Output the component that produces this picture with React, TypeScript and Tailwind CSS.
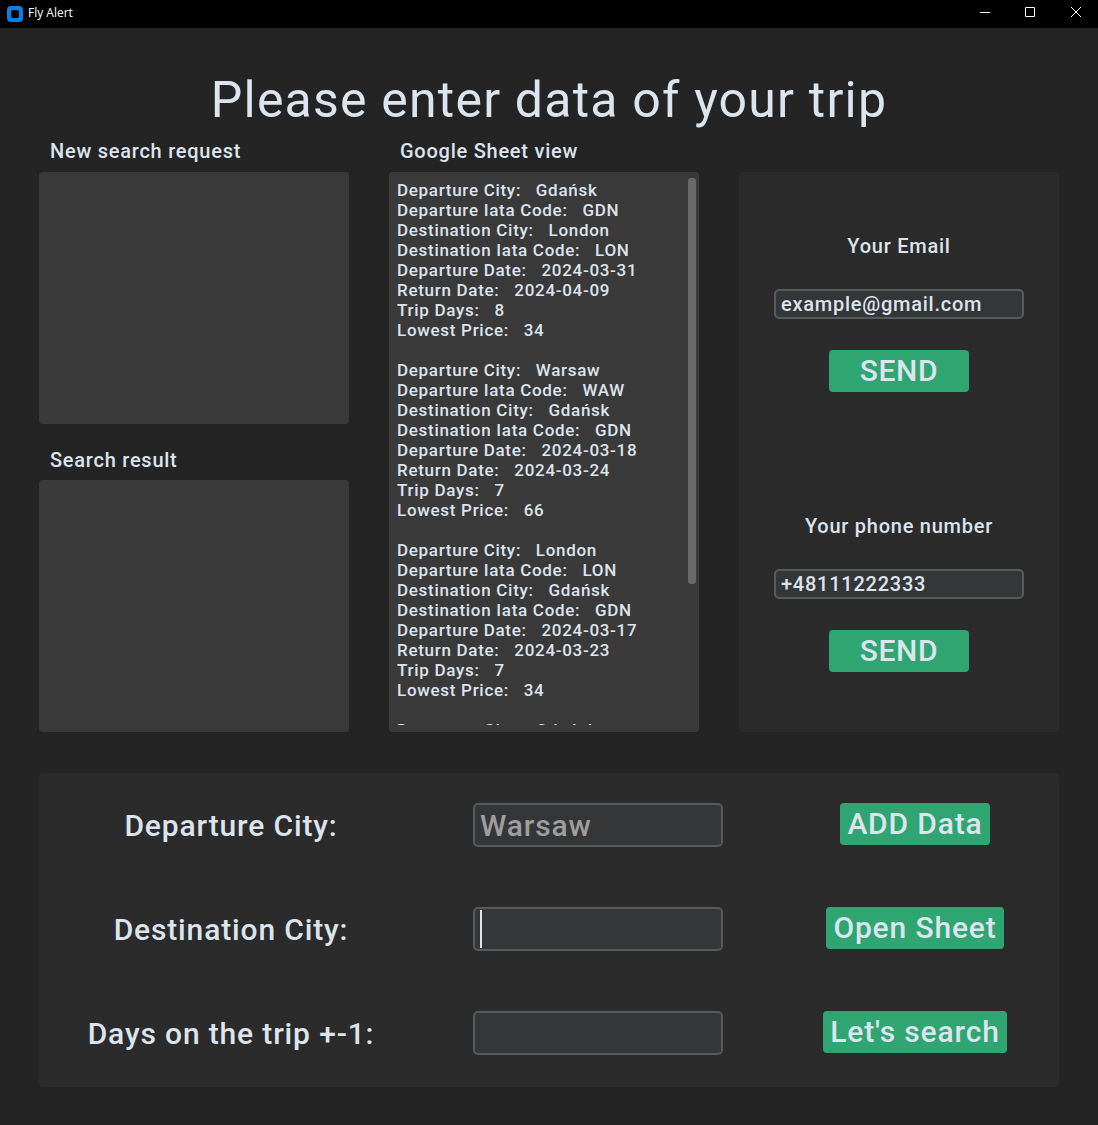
import React from "react";

const trips = [
  ["Gdańsk", "GDN", "London", "LON", "2024-03-31", "2024-04-09", "8", "34"],
  ["Warsaw", "WAW", "Gdańsk", "GDN", "2024-03-18", "2024-03-24", "7", "66"],
  ["London", "LON", "Gdańsk", "GDN", "2024-03-17", "2024-03-23", "7", "34"],
  ["Gdańsk", "GDN", "London", "LON", "2024-03-31", "2024-04-09", "8", "34"],
];
const labels = ["Departure City", "Departure Iata Code", "Destination City", "Destination Iata Code", "Departure Date", "Return Date", "Trip Days", "Lowest Price"];

function Contact({ label, value }: { label: string; value: string }) {
  return (
    <div className="flex h-[280px] flex-col items-center">
      <div className="mt-[60px] h-[28px] text-[20px] leading-[28px] tracking-[0.75px]">{label}</div>
      <div className="mt-[29px] flex h-[30px] w-[250px] items-center rounded-[5px] border-2 border-[#565b5e] bg-[#343638] pl-[5px] text-[20px] tracking-[0.75px]">{value}</div>
      <button className="mt-[31px] h-[42px] w-[140px] rounded-[4px] bg-[#2fa572] text-[30px] leading-[42px] tracking-[0.6px]">SEND</button>
    </div>
  );
}

function Row({ label, button, width, children }: { label: string; button: string; width: string; children?: React.ReactNode }) {
  return (
    <div className="flex h-[44px] items-center">
      <div className="w-[384px] text-center text-[30px] tracking-[0.85px]">{label}</div>
      <div className="ml-[50px] flex h-[44px] w-[250px] items-center rounded-[5px] border-2 border-[#565b5e] bg-[#343638] pl-[5px] text-[30px] tracking-[0.85px] text-[#9e9e9e]">{children}</div>
      <div className="ml-[50px] flex w-[284px] justify-center">
        <button className={"mb-[2px] h-[42px] whitespace-nowrap rounded-[4px] bg-[#2fa572] text-[30px] leading-[42px] tracking-[0.85px] " + width}>{button}</button>
      </div>
    </div>
  );
}

export default function App() {
  return (
    <div className="flex h-[1125px] w-[1098px] flex-col overflow-hidden bg-[#242424] font-['Roboto',sans-serif] font-medium text-[#dce4ee]">
      <header className="flex h-7 shrink-0 items-center bg-black text-white">
        <svg className="ml-[7px]" width="16" height="16" viewBox="0 0 16 16">
          <rect width="16" height="16" rx="4" fill="#0b7fe0" />
          <rect x="4" y="4" width="8" height="8" rx="2" fill="#000" />
        </svg>
        <span className="ml-[5px] mt-[-3px] font-['Open_Sans',sans-serif] text-[12px] font-normal">Fly Alert</span>
        <svg className="ml-auto" width="138" height="28" fill="none" stroke="#fff">
          <path d="M20 12.5h10M65.500 7.500h9v9h-9zM111 7l10 10M121 7l-10 10" />
        </svg>
      </header>
      <h1 className="mt-[36px] h-[72px] text-center text-[50px] font-normal leading-[72px] tracking-[1.2px]">Please enter data of your trip</h1>
      <main className="flex h-[596px] shrink-0 pl-[39px]">
        <section className="w-[310px]">
          <h2 className="h-9 pl-[11px] text-[20px] font-medium leading-[30px] tracking-[0.75px]">New search request</h2>
          <div className="h-[252px] rounded-[4px] bg-[#3a3a3a]" />
          <h2 className="mt-[21px] h-[35px] pl-[11px] text-[20px] font-medium leading-[30px] tracking-[0.75px]">Search result</h2>
          <div className="h-[252px] rounded-[4px] bg-[#3a3a3a]" />
        </section>
        <section className="ml-10 w-[310px]">
          <h2 className="h-9 pl-[11px] text-[20px] font-medium leading-[30px] tracking-[0.75px]">Google Sheet view</h2>
          <div className="flex h-[560px] justify-between rounded-[4px] bg-[#3a3a3a] pb-[7px] pl-[8px] pr-[3px] pt-[6px]">
            <div className="overflow-hidden pt-[2px] text-[17px] leading-5 tracking-[0.7px]">
              {trips.map((trip, i) => (
                <div key={i} className="mb-5">
                  {trip.map((value, j) => <div key={j} className="h-5 whitespace-pre">{labels[j]}:{"   "}{value}</div>)}
                </div>
              ))}
            </div>
            <div className="h-[406px] w-2 rounded-[3px] bg-[#696969]" />
          </div>
        </section>
        <aside className="ml-10 mt-9 h-[560px] w-[320px] rounded-[4px] bg-[#2b2b2b]">
          <Contact label="Your Email" value="example@gmail.com" />
          <Contact label="Your phone number" value="+48111222333" />
        </aside>
      </main>
      <section className="ml-[39px] mt-[41px] flex h-[314px] w-[1020px] shrink-0 flex-col gap-[60px] rounded-[4px] bg-[#2b2b2b] pt-[30px]">
        <Row label="Departure City:" button="ADD Data" width="w-[150px]">Warsaw</Row>
        <Row label="Destination City:" button="Open Sheet" width="w-[178px]"><span className="h-[38px] w-[2px] bg-[#dce4ee]" /></Row>
        <Row label="Days on the trip +-1:" button="Let's search" width="w-[184px]" />
      </section>
    </div>
  );
}
